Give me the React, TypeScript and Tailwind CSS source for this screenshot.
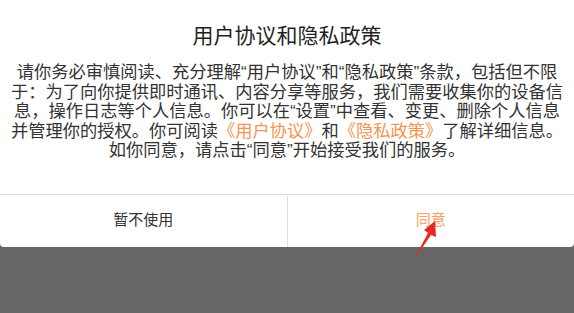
const lines = [
  "请你务必审慎阅读、充分理解“用户协议”和“隐私政策”条款，包括但不限",
  "于：为了向你提供即时通讯、内容分享等服务，我们需要收集你的设备信",
  "息，操作日志等个人信息。你可以在“设置”中查看、变更、删除个人信息",
];

const App = () => {
  return (
    <div
      className="relative h-[313px] w-[574px] overflow-hidden bg-[#666666]"
      style={{ fontFamily: '"Liberation Sans", "Noto Sans CJK SC", sans-serif' }}
    >
      {/* Dialog */}
      <div className="flex flex-col rounded-b-[4px] bg-white">
        <div className="pt-[22px] text-center text-[21px] leading-[28px] text-[#1f1f1f]">用户协议和隐私政策</div>

        <div className="mt-[13px] flex flex-col items-center text-[17.25px] leading-[19.5px] text-[#333333]">
          {lines.map((line) => (
            <div key={line} className="whitespace-nowrap">
              {line}
            </div>
          ))}
          <div className="whitespace-nowrap">
            并管理你的授权。你可阅读<span className="text-[#f3944f]">《用户协议》</span>和
            <span className="text-[#f3944f]">《隐私政策》</span>了解详细信息。
          </div>
          <div className="whitespace-nowrap">如你同意，请点击“同意”开始接受我们的服务。</div>
        </div>

        {/* Buttons */}
        <div className="mt-[33px] flex h-[53px] border-t border-[#dedede]">
          <div className="flex flex-1 items-center justify-center border-r border-[#dedede] text-[15px] text-[#333333]">
            暂不使用
          </div>
          <div className="flex flex-1 items-center justify-center text-[15px] text-[#f5a16a]">同意</div>
        </div>
      </div>

      {/* Annotation arrow */}
      <svg className="pointer-events-none absolute inset-0" width="574" height="313" viewBox="0 0 574 313">
        <polygon points="413,261 431,235 436,237 435,221 424,230 428,233" fill="#e52a1f" />
      </svg>
    </div>
  );
};

export default App;
